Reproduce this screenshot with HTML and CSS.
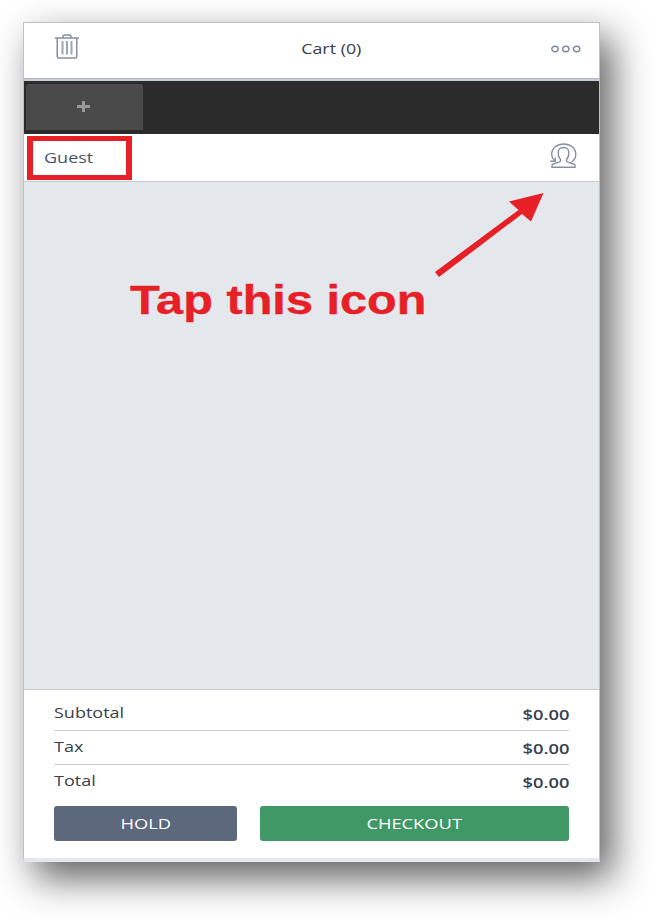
FILE: index.html
```html
<!DOCTYPE html>
<html lang="en">
<head>
<meta charset="utf-8">
<title>Cart</title>
<link rel="stylesheet" href="styles.css">
</head>
<body>
<main class="cart">
  <header class="header">
    <svg class="trash" width="24" height="26" viewBox="0 0 24 26" fill="none" stroke="#8490a2" stroke-width="1.5">
      <path d="M0 4H24M8 4V2.5Q8 1 9.500 1H14.500Q16 1 16 2.500V4M2.200 4V22.500Q2.200 24 3.700 24H20.300Q21.800 24 21.800 22.500V4"/>
      <path stroke="#9aa5b4" stroke-width="2" d="M7.500 7V20.500M12 7V20.500M16.500 7V20.500"/>
    </svg>
    <h1 class="title"><span class="wide">Cart (0)</span></h1>
    <svg class="more" width="30" height="8" viewBox="0 0 30 8" fill="none" stroke="#7e8b9e" stroke-width="1.4">
      <ellipse cx="4" cy="4" rx="3.200" ry="2.700"/><ellipse cx="14.800" cy="4" rx="3.200" ry="2.700"/><ellipse cx="25.600" cy="4" rx="3.200" ry="2.700"/>
    </svg>
  </header>
  <nav class="tabs">
    <button class="tab" aria-label="Add">
      <svg width="13" height="11" viewBox="0 0 13 11" fill="#999"><path d="M5 0H8V4H13V7H8V11H5V7H0V4H5Z"/></svg>
    </button>
  </nav>
  <section class="customer">
    <div class="guest"><span class="wide">Guest</span></div>
    <svg class="person" width="28" height="26" viewBox="0 0 28 26" fill="none" stroke="#8490a2" stroke-width="1.400">
      <path d="M2 24.300V22.500Q2 21.200 5 20.500L9 19.200Q11 18.500 10.500 16.500Q8 14 8.200 10Q8 4.500 13.500 4.500Q19 4.500 18.700 10Q19 14 16.500 16.500Q16 18.500 18 19.200L22 20.500Q25 21.200 25 22.500V24.300Z"/>
      <path d="M4.800 18Q1.700 15 1.700 11.500C1.700 5 7 1 13.700 1C20.500 1 25.800 5 25.800 11.500Q25.800 16 21.500 19"/>
      <path d="M.3 18.300H5.200V14.500"/>
    </svg>
  </section>
  <section class="items">
    <p class="hint"><span class="hint-text">Tap this icon</span></p>
    <svg class="arrow" width="110" height="84" viewBox="0 0 110 84" fill="#e72027">
      <path d="M0 79L83.500 17L74 8.500L108.500 0L96 28.500L87 21L4 84Z"/>
    </svg>
  </section>
  <section class="summary">
    <dl class="totals">
      <div class="row"><dt class="wide">Subtotal</dt><dd>$0.00</dd></div>
      <div class="row"><dt class="wide">Tax</dt><dd>$0.00</dd></div>
      <div class="row"><dt class="wide">Total</dt><dd>$0.00</dd></div>
    </dl>
    <div class="actions">
      <button class="button hold"><span>HOLD</span></button>
      <button class="button checkout"><span>CHECKOUT</span></button>
    </div>
  </section>
</main>
</body>
</html>
```

FILE: styles.css
```css
* { box-sizing: border-box; }
body {
  margin: 0;
  height: 917px;
  overflow: hidden;
  padding: 22px 0 0 23px;
  background: #fff;
  color: #39404c;
  font: 15px/20px "Open Sans", "Noto Sans", sans-serif;
}
h1, p, dl, dt, dd { margin: 0; font-weight: 400; }
button { border: 0; padding: 0; font: inherit; }
svg { display: block; }
.wide { display: inline-block; transform: scaleX(1.2); transform-origin: left; }
.cart {
  width: 577px;
  height: 840px;
  display: flex;
  flex-direction: column;
  border: 1px solid #c1c2c5;
  border-bottom: 4px solid #e4e8ed;
  background: #fff;
  box-shadow: 12px 16px 36px rgba(0, 0, 0, .63);
}
.header {
  height: 58px;
  flex: none;
  display: grid;
  grid-template-columns: 1fr auto 1fr;
  padding: 0 18px 0 31px;
  border-bottom: 2px solid #c8ced9;
  box-shadow: inset 0 -1px #b3b7c3;
}
.trash { margin-top: 11px; }
.more { margin-top: 22px; justify-self: end; }
.title { font-size: inherit; margin-top: 15px; }
.title .wide { transform: translateX(13px) scaleX(1.19); transform-origin: center; }
.tabs { height: 53px; flex: none; background: #2b2b2b; padding: 3px 0 0 2px; }
.tab {
  width: 117px;
  height: 46px;
  display: flex;
  align-items: center;
  justify-content: center;
  padding: 0 2px 2px 0;
  border-radius: 3px 3px 0 0;
  background: #4a4a4a;
}
.customer {
  height: 48px;
  flex: none;
  display: flex;
  justify-content: space-between;
  padding: 2px 21.5px 0 3px;
  border-bottom: 1px solid #c9cbce;
}
.guest { width: 105px; height: 44px; border: 5px solid #e72027; border-width: 5px 6px; padding: 6px 0 0 11px; color: #48556a; }
.person { margin-top: 7px; }
.items { flex: 1; display: flex; align-items: flex-start; background: #e4e8ed; }
.hint { width: 305px; margin: 93px 0 0 106px; color: #e72027; font: 700 41px/50px "Liberation Sans", Arial, sans-serif; white-space: nowrap; }
.hint-text { display: inline-block; transform: scaleX(1.187); transform-origin: left; -webkit-text-stroke: .4px #e72027; }
.arrow { margin-top: 11px; }
.summary { height: 169px; flex: none; border-top: 1px solid #c9cbce; padding: 7px 30px 0; }
.row { height: 34px; display: flex; justify-content: space-between; border-bottom: 1px solid #cbcdd0; padding-top: 5px; }
.row:last-child { border: 0; }
.row dd { padding-top: 2px; font-weight: 600; transform: scaleX(1.22); transform-origin: right; }
.actions { display: grid; grid-template-columns: 183px 309px; gap: 23px; margin-top: 7px; }
.button { height: 35px; border-radius: 3px; color: #fff; padding-bottom: 2px; }
.button span { display: inline-block; transform: scaleX(1.22); }
.hold { background: #5c687c; font-weight: 500; }
.checkout { background: #3f9866; }
```
